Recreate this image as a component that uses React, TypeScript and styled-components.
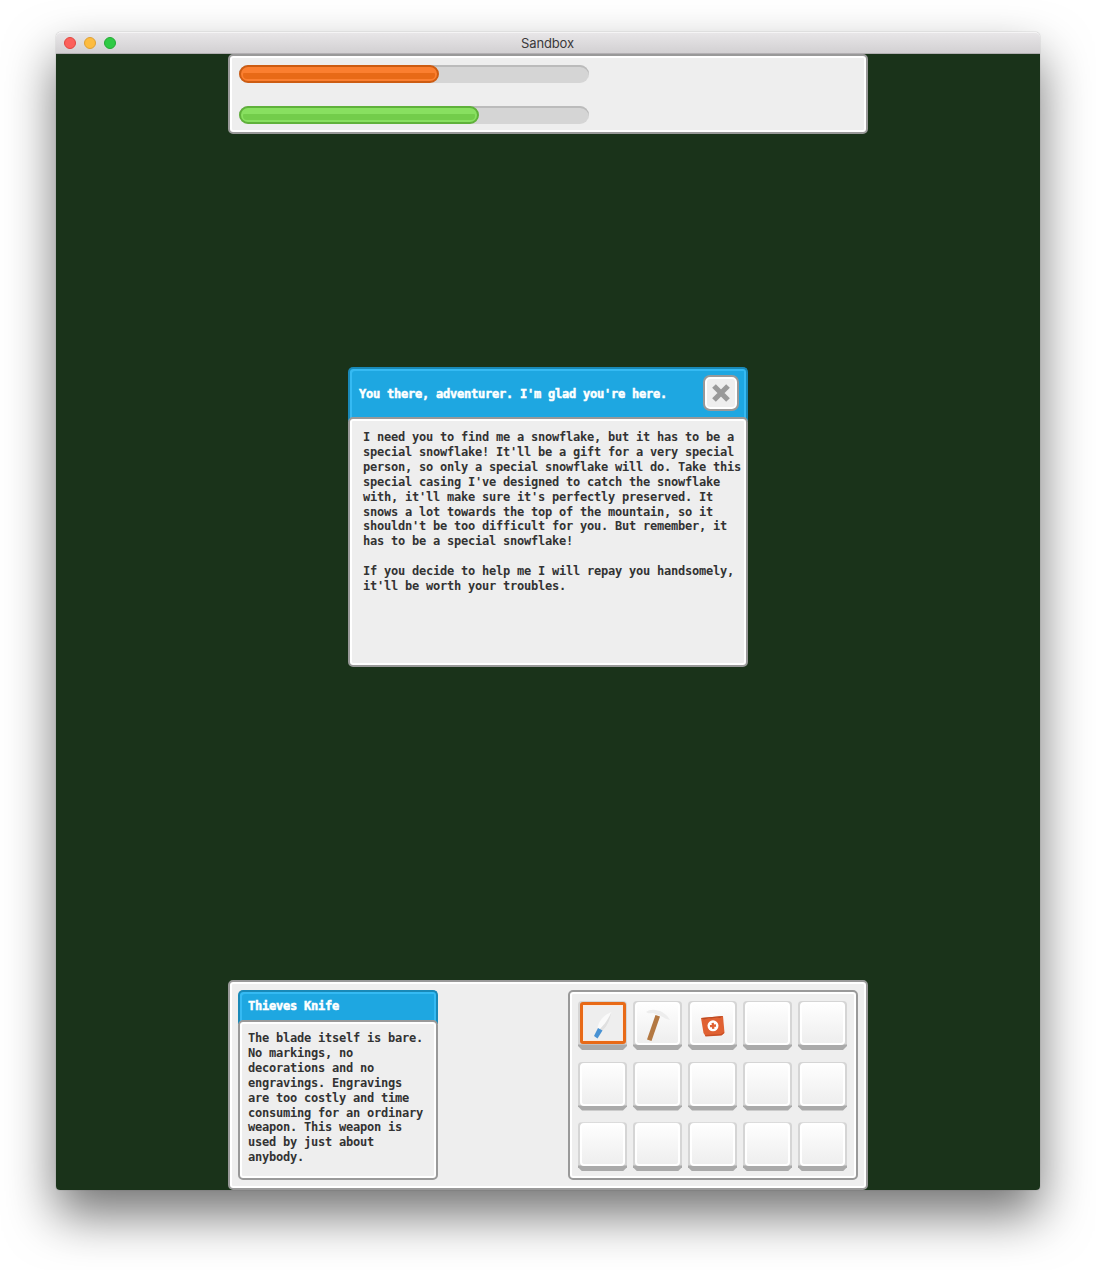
import React from 'react';
import styled, { createGlobalStyle, css } from 'styled-components';

const GlobalStyle = createGlobalStyle`
  * { box-sizing: border-box; }
  body { margin: 0; background: #fff; overflow: hidden; }
`;

const Desktop = styled.main`
  height: 1270px;
  padding: 32px 56px 80px;
  overflow: hidden;
`;

const Window = styled.section`
  height: 1158px;
  border-radius: 5px 5px 4px 4px;
  display: flex;
  flex-direction: column;
  box-shadow: 0 0 1px rgba(0, 0, 0, 0.5), 0 25px 50px rgba(0, 0, 0, 0.55);
`;

const TitleBar = styled.header`
  height: 22px;
  display: grid;
  grid-template-columns: 1fr auto 1fr;
  align-items: center;
  padding: 0 9px 0 8px;
  border-radius: 5px 5px 0 0;
  border-top: 1px solid #f5f4f5;
  border-bottom: 1px solid #b2afb2;
  background: linear-gradient(#e8e6e8, #d2d0d2);
  font: 13px/20px Inter, sans-serif;
  letter-spacing: -0.13px;
  color: #3b393b;
`;

const Lights = styled.div`
  display: flex;
  gap: 8px;
`;

const Light = styled.span<{ $fill: string; $edge: string }>`
  width: 12px;
  height: 12px;
  border-radius: 50%;
  background: ${(p) => p.$fill};
  border: 1px solid ${(p) => p.$edge};
`;

const Stage = styled.div`
  flex: 1;
  display: flex;
  flex-direction: column;
  justify-content: space-between;
  align-items: center;
  background: #1a331a;
  border-radius: 0 0 4px 4px;
  overflow: hidden;
`;

const panel = css`
  background: #eee;
  border: 2px solid #999;
  border-radius: 5px;
  box-shadow: inset 0 0 0 2px #fff;
`;

const StatusPanel = styled.section`
  ${panel}
  width: 640px;
  height: 80px;
  padding: 9px;
  display: flex;
  flex-direction: column;
  gap: 23px;
`;

const Track = styled.div`
  width: 350px;
  height: 18px;
  border-radius: 9px;
  background: #d5d5d5;
  box-shadow: inset 0 2px 0 #bbb;
`;

const Fill = styled.div<{ $w: number; $edge: string; $light: string; $dark: string }>`
  width: ${(p) => p.$w}px;
  height: 18px;
  padding: 6px 2px 2px;
  border-radius: 9px;
  border: 2px solid ${(p) => p.$edge};
  background: ${(p) => p.$light};
  &::after {
    content: '';
    display: block;
    height: 6px;
    border-radius: 1px 1px 4px 4px;
    background: ${(p) => p.$dark};
  }
`;

const Card = styled.article<{ $w: number; $h: number }>`
  width: ${(p) => p.$w}px;
  height: ${(p) => p.$h}px;
  display: flex;
  flex-direction: column;
`;

const QuestCard = styled(Card)`
  margin-bottom: 80px;
`;

const CardHeader = styled.header<{ $h: number; $inset: number; $drop: number }>`
  height: ${(p) => p.$h}px;
  flex: none;
  display: flex;
  align-items: center;
  justify-content: space-between;
  padding: 0 7px ${(p) => p.$drop}px ${(p) => p.$inset}px;
  border: 2px solid #1989b8;
  border-bottom: 0;
  border-radius: 5px 5px 0 0;
  background: #1ea7e1;
  box-shadow: inset 2px 2px 0 #35baf3, inset -2px 0 0 #35baf3;
`;

const Title = styled.h2`
  margin: 0;
  font: bold 12px/15px 'DejaVu Sans Mono', monospace;
  letter-spacing: -0.224px;
  color: #fff;
  -webkit-text-stroke: 0.5px #fff;
  white-space: pre;
`;

const CardBody = styled.div<{ $pad: string }>`
  ${panel}
  flex: 1;
  margin-top: -4px;
  padding: ${(p) => p.$pad};
`;

const Copy = styled.p`
  margin: 0;
  font: bold 12px/14.9px 'DejaVu Sans Mono', monospace;
  letter-spacing: -0.224px;
  color: #333;
  white-space: pre;
`;

const CloseButton = styled.button`
  ${panel}
  width: 36px;
  height: 36px;
  margin-top: -2px;
  padding: 0;
  display: grid;
  place-items: center;
  border-radius: 7px;
`;

const Hud = styled.section`
  ${panel}
  width: 640px;
  height: 210px;
  padding: 8px;
  display: flex;
  justify-content: space-between;
`;

const Inventory = styled.div`
  ${panel}
  width: 290px;
  height: 190px;
  padding: 9px 8px;
  display: grid;
  grid-template-columns: repeat(5, 49px);
  grid-template-rows: 49px 49px 49px;
  column-gap: 6px;
  row-gap: 11.6px;
`;

const Slot = styled.div`
  height: 49px;
  padding: 1px 2px 5px;
  border-radius: 4px 4px 0 0;
  background: linear-gradient(#d5d5d5 43px, #aaa 44px);
  clip-path: polygon(0 0, 100% 0, 100% 45px, 45px 100%, 4px 100%, 0 45px);
`;

const Face = styled.div<{ $selected: boolean }>`
  height: 43px;
  padding-top: 3px;
  border: 2px solid #fff;
  border-radius: 4px;
  background: linear-gradient(#fefefe, #eee);
  display: grid;
  place-items: center;
  ${(p) =>
    p.$selected &&
    css`
      height: 42px;
      margin-right: -1px;
      border: 3px solid #e86a17;
      border-radius: 3px;
      background: #eee;
      box-shadow: inset 0 0 0 1px #fbeade;
    `}
`;

const Knife = () => (
  <svg width="20" height="28" viewBox="0 0 20 28">
    <path d="M18.500 1C11 4 6 9 4.500 17l4.500 3c6-5 8-12 9.500-19Z" fill="#fafafa" />
    <path d="M18.500 1C15.500 8 11 14 6.500 18.500L9 20c6-5 8-12 9.500-19Z" fill="#e0e0e0" />
    <path d="m5 17 4.500 2.500-5 8-3.500-2.500Z" fill="#4892d3" />
  </svg>
);

const Pickaxe = () => (
  <svg width="26" height="32" viewBox="0 0 26 32">
    <path d="M1 3c3-2 6-2.500 9-2l5 1c4 2 8 5 10 9-5-1-8-4-12-5l-5-2C5 4.500 3 4.500 1 3Z" fill="#ededed" />
    <path d="m10.500 6 4.500 1.500-8.500 24.500-4.500-1.500Z" fill="#b37842" />
  </svg>
);

const MedKit = () => (
  <svg width="24" height="24" viewBox="0 0 24 24">
    <path d="M5 3 18 2 12 0Z" fill="#fff" />
    <path d="m0 5 22-2 1.500 17-3 2-16 1-2-3Z" fill="#e06132" />
    <path d="M0 5 22 3l-3 2-3-.5-6 1-2-.5-5 1.500Z" fill="#b94a23" />
    <path d="m4 22 16-1 3-2-.2 1.500-2.300 2-16 1Z" fill="#c94f25" />
    <circle cx="12" cy="12.800" r="5.500" fill="#fff" />
    <path d="M11.700 9.800l.6 6M9 13.100l6-.6" stroke="#e06132" strokeWidth="2.300" />
  </svg>
);

const Cross = () => (
  <svg width="18" height="18" viewBox="0 0 18 18">
    <path d="m2 2 14 14M16 2 2 16" stroke="#999" strokeWidth="5.200" />
  </svg>
);

const icons = [<Knife />, <Pickaxe />, <MedKit />];

const questText = `I need you to find me a snowflake, but it has to be a
special snowflake! It'll be a gift for a very special
person, so only a special snowflake will do. Take this
special casing I've designed to catch the snowflake
with, it'll make sure it's perfectly preserved. It
snows a lot towards the top of the mountain, so it
shouldn't be too difficult for you. But remember, it
has to be a special snowflake!

If you decide to help me I will repay you handsomely,
it'll be worth your troubles.`;

const itemText = `The blade itself is bare.
No markings, no
decorations and no
engravings. Engravings
are too costly and time
consuming for an ordinary
weapon. This weapon is
used by just about
anybody.`;

export default function App() {
  return (
    <Desktop>
      <GlobalStyle />
      <Window>
        <TitleBar>
          <Lights>
            <Light $fill="#fc605b" $edge="#e2463f" />
            <Light $fill="#fdbc40" $edge="#dfa034" />
            <Light $fill="#2fca45" $edge="#24aa34" />
          </Lights>
          <span>Sandbox</span>
        </TitleBar>
        <Stage>
          <StatusPanel>
            <Track>
              <Fill $w={200} $edge="#cd5c12" $light="#fb7f30" $dark="#e86a17" />
            </Track>
            <Track>
              <Fill $w={240} $edge="#5fb13a" $light="#88e060" $dark="#73cd4b" />
            </Track>
          </StatusPanel>
          <QuestCard $w={400} $h={300}>
            <CardHeader $h={54} $inset={9} $drop={2}>
              <Title>You there, adventurer. I'm glad you're here.</Title>
              <CloseButton aria-label="Close">
                <Cross />
              </CloseButton>
            </CardHeader>
            <CardBody $pad="11px 0 0 13px">
              <Copy>{questText}</Copy>
            </CardBody>
          </QuestCard>
          <Hud>
            <Card $w={200} $h={190}>
              <CardHeader $h={34} $inset={8} $drop={3}>
                <Title>Thieves Knife</Title>
              </CardHeader>
              <CardBody $pad="9px 0 0 8px">
                <Copy>{itemText}</Copy>
              </CardBody>
            </Card>
            <Inventory>
              {Array.from({ length: 15 }, (_, i) => (
                <Slot key={i}>
                  <Face $selected={i === 0}>{icons[i]}</Face>
                </Slot>
              ))}
            </Inventory>
          </Hud>
        </Stage>
      </Window>
    </Desktop>
  );
}
